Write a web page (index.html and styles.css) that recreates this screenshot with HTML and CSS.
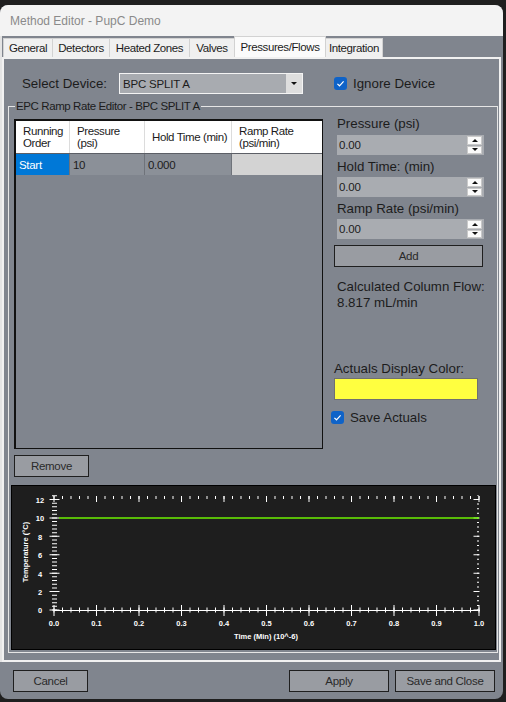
FILE: index.html
```html
<!DOCTYPE html>
<html lang="en">
<head>
  <meta charset="UTF-8" />
  <title>Method Editor - PupC Demo</title>
  <link rel="stylesheet" href="styles.css">
</head>
<body>

  <div class="window">
    <div class="titlebar">Method Editor - PupC Demo</div>

    <div class="tabctl">
      <div class="tabstrip">
        <div class="tab t-general">General</div>
        <div class="tab t-detectors">Detectors</div>
        <div class="tab t-zones">Heated Zones</div>
        <div class="tab t-valves">Valves</div>
        <div class="tab t-flows active">Pressures/Flows</div>
        <div class="tab t-integration">Integration</div>
      </div>

      <div class="tabpage">
        <div class="device-row">
          <label class="device-label">Select Device:</label>
          <div class="combo">
            <span class="combo-text">BPC SPLIT A</span>
            <span class="combo-btn"></span>
          </div>
          <div class="checkrow ignore">
            <svg class="check" width="13" height="13" viewBox="0 0 13 13">
              <rect width="13" height="13" rx="3" fill="#0f63c8"/>
              <path d="M3.4 6.9 L5.5 8.8 L9.6 4.4" fill="none" stroke="#fff" stroke-width="1.2"/>
            </svg>
            <span>Ignore Device</span>
          </div>
        </div>

        <fieldset class="group">
          <legend>EPC Ramp Rate Editor - BPC SPLIT A</legend>

          <div class="editor">
            <div class="grid">
              <div class="grid-head">
                <div class="hcell">Running<br>Order</div>
                <div class="hcell">Pressure<br>(psi)</div>
                <div class="hcell">Hold Time (min)</div>
                <div class="hcell">Ramp Rate<br>(psi/min)</div>
              </div>
              <div class="grid-row">
                <div class="cell selected">Start</div>
                <div class="cell">10</div>
                <div class="cell">0.000</div>
                <div class="cell blank"></div>
              </div>
            </div>

            <div class="side">
              <div class="side-label">Pressure (psi)</div>
              <div class="spin">
                <span class="spin-value">0.00</span>
                <span class="spin-btns"><span class="up"></span><span class="down"></span></span>
              </div>

              <div class="side-label">Hold Time: (min)</div>
              <div class="spin">
                <span class="spin-value">0.00</span>
                <span class="spin-btns"><span class="up"></span><span class="down"></span></span>
              </div>

              <div class="side-label">Ramp Rate (psi/min)</div>
              <div class="spin">
                <span class="spin-value">0.00</span>
                <span class="spin-btns"><span class="up"></span><span class="down"></span></span>
              </div>

              <button class="btn add">Add</button>

              <div class="flow">Calculated Column Flow:<br>8.817 mL/min</div>

              <div class="color-label">Actuals Display Color:</div>
              <div class="color-swatch"></div>

              <div class="checkrow save">
                <svg class="check" width="13" height="13" viewBox="0 0 13 13">
                  <rect width="13" height="13" rx="3" fill="#0f63c8"/>
                  <path d="M3.4 6.9 L5.5 8.8 L9.6 4.4" fill="none" stroke="#fff" stroke-width="1.2"/>
                </svg>
                <span>Save Actuals</span>
              </div>
            </div>
          </div>

          <button class="btn remove">Remove</button>

          <!-- ramp chart: plot box runs x 43..468, y 11..125 (0..12 on the y axis) -->
          <svg class="chart" width="485" height="165" viewBox="0 0 485 165">
            <rect x="0.5" y="0.5" width="484" height="164" fill="#1e1e1e" stroke="#000"/>

            <g stroke="#fff">
              <!-- bottom axis -->
              <line x1="43" y1="125.5" x2="469" y2="125.5" stroke-width="1"/>
              <line x1="42.5" y1="125" x2="469" y2="125" stroke-width="5" stroke-dasharray="1 7.5"/>
              <line x1="42.5" y1="125.5" x2="469" y2="125.5" stroke-width="11" stroke-dasharray="1 41.5"/>
              <!-- top axis -->
              <line x1="42.5" y1="12.5" x2="469" y2="12.5" stroke-width="3" stroke-dasharray="1 7.5"/>
              <line x1="42.5" y1="14" x2="469" y2="14" stroke-width="6" stroke-dasharray="1 41.5"/>
              <!-- left axis -->
              <line x1="43.5" y1="125.5" x2="43.5" y2="10" stroke-width="5" stroke-dasharray="1 2.684"/>
              <line x1="43.5" y1="125.5" x2="43.5" y2="10" stroke-width="10" stroke-dasharray="1 17.42"/>
              <!-- right axis -->
              <line x1="467" y1="125.5" x2="467" y2="10" stroke-width="2" stroke-dasharray="1 3.605"/>
              <line x1="465.5" y1="125.5" x2="465.5" y2="10" stroke-width="6" stroke-dasharray="1 17.42"/>
            </g>

            <line x1="48" y1="33" x2="468" y2="33" stroke="#6cf000" stroke-width="1.6"/>

            <g class="tick-labels" text-anchor="middle">
              <text x="29" y="17.5">12</text>
              <text x="29" y="36">10</text>
              <text x="29" y="54.5">8</text>
              <text x="29" y="73">6</text>
              <text x="29" y="91.5">4</text>
              <text x="29" y="110">2</text>
              <text x="29" y="128">0</text>

              <text x="43" y="141">0.0</text>
              <text x="85.5" y="141">0.1</text>
              <text x="128" y="141">0.2</text>
              <text x="170.5" y="141">0.3</text>
              <text x="213" y="141">0.4</text>
              <text x="255.5" y="141">0.5</text>
              <text x="298" y="141">0.6</text>
              <text x="340.5" y="141">0.7</text>
              <text x="383" y="141">0.8</text>
              <text x="425.5" y="141">0.9</text>
              <text x="468" y="141">1.0</text>

              <text x="255" y="154">Time (Min) (10^-6)</text>
              <text x="17" y="67" transform="rotate(-90 17 67)">Temperature (°C)</text>
            </g>
          </svg>
        </fieldset>
      </div>
    </div>

    <div class="footer">
      <button class="btn cancel">Cancel</button>
      <button class="btn apply">Apply</button>
      <button class="btn save-close">Save and Close</button>
    </div>
  </div>

</body>
</html>
```

FILE: styles.css
```css
body {
  margin: 0;
  background: #1f1f1f;
  font-family: "Liberation Sans", Arial, sans-serif;
  color: #1c1c1c;
}

.window {
  width: 503px;
  height: 694px;
  margin-top: 5px;
  background: #80858e;
  border-radius: 8px;
  overflow: hidden;
  display: flex;
  flex-direction: column;
}

.titlebar {
  height: 31px;
  flex-shrink: 0;
  background: #f3f3f3;
  display: flex;
  align-items: center;
  padding-left: 10px;
  font-size: 12px;
  color: #8a8a8a;
}

/* tab control */

.tabctl {
  height: 626px;
  flex-shrink: 0;
  display: flex;
  flex-direction: column;
  border-left: 2px solid #e4e4e4;
  padding-right: 2px;
}

.tabstrip {
  height: 21px;
  display: flex;
  align-items: flex-end;
  padding-left: 1px;
}

.tab {
  height: 19px;
  box-sizing: border-box;
  background: #f0f0f0;
  border: 1px solid #d2d2d2;
  border-bottom: none;
  margin-right: -1px;
  font-size: 11.5px;
  letter-spacing: -0.4px;
  display: flex;
  align-items: center;
  justify-content: center;
}

.tab.active {
  height: 21px;
  background: #fbfbfb;
}

.t-general { width: 50px; }
.t-detectors { width: 58px; }
.t-zones { width: 81px; }
.t-valves { width: 46px; }
.t-flows { width: 92px; }
.t-integration { width: 58px; }

.tabpage {
  flex: 1;
  border: 2px solid #f1f1f1;
  background: #80858e;
}

/* device selector */

.device-row {
  display: flex;
  align-items: center;
  height: 21px;
  margin-top: 14px;
  padding-left: 18px;
  font-size: 13.3px;
}

.device-label {
  width: 97px;
}

.combo {
  width: 184px;
  height: 21px;
  box-sizing: border-box;
  border: 1px solid #f4f4f4;
  background: #a8abb0;
  display: flex;
  align-items: center;
}

.combo-text {
  flex: 1;
  padding-left: 3px;
  font-size: 11.5px;
  letter-spacing: -0.2px;
}

.combo-btn {
  width: 16px;
  height: 100%;
  background: #dedede;
  display: flex;
  align-items: center;
  justify-content: center;
}

.combo-btn::after {
  content: "";
  border-left: 3px solid transparent;
  border-right: 3px solid transparent;
  border-top: 3px solid #111;
}

.checkrow {
  display: flex;
  align-items: center;
  gap: 6px;
  font-size: 13.3px;
}

.checkrow.ignore {
  margin-left: 31px;
}

.check {
  display: block;
  flex-shrink: 0;
}

/* ramp editor group */

.group {
  margin: 5px 1px 0 4px;
  padding: 6px 1px 2px 5px;
  border: 1px solid #e6e6e6;
  min-width: 0;
}

.group legend {
  margin-left: 1px;
  padding: 0 1px;
  font-size: 11.5px;
  letter-spacing: -0.4px;
  line-height: 14px;
}

.editor {
  display: flex;
  gap: 11px;
}

.grid {
  width: 309px;
  height: 330px;
  box-sizing: border-box;
  border: solid #111;
  border-width: 2px 1px 1px 2px;
}

.grid-head,
.grid-row {
  display: grid;
  grid-template-columns: 54px 75px 87px 1fr;
}

.grid-head {
  height: 33px;
  box-sizing: border-box;
  background: #fff;
  border-bottom: 1px solid #5c5f66;
}

.hcell {
  display: flex;
  align-items: center;
  padding-left: 7px;
  border-right: 1px solid #dcdcdc;
  font-size: 11.5px;
  letter-spacing: -0.4px;
  line-height: 12px;
  white-space: nowrap;
}

.hcell:last-child {
  border-right: none;
}

.grid-row {
  height: 21px;
}

.cell {
  display: flex;
  align-items: center;
  padding-left: 3px;
  background: #8b9098;
  border-right: 1px solid #6f737a;
  font-size: 11.5px;
  letter-spacing: -0.3px;
}

.cell.selected {
  background: #0078d7;
  color: #fff;
}

.cell.blank {
  background: #d3d3d3;
  border-right: none;
}

/* side panel */

.side {
  width: 149px;
  margin-top: -2px;
  display: flex;
  flex-direction: column;
  font-size: 13.3px;
}

.side-label {
  line-height: 14px;
  margin: 5px 0 3px 3px;
  white-space: nowrap;
}

.side-label:first-child {
  margin-top: 0;
  margin-bottom: 4px;
}

.spin {
  width: 147px;
  height: 20px;
  margin-left: 3px;
  background: #a9acb1;
  display: flex;
  align-items: center;
}

.spin-value {
  flex: 1;
  padding-left: 2px;
  font-size: 11.5px;
  letter-spacing: -0.2px;
}

.spin-btns {
  width: 15px;
  height: 18px;
  margin-right: 2px;
  display: flex;
  flex-direction: column;
  gap: 1px;
}

.spin-btns span {
  flex: 1;
  background: #fafafa;
  border: 1px solid #c9c9c9;
  display: flex;
  align-items: center;
  justify-content: center;
}

.spin-btns .up::after {
  content: "";
  border-left: 3px solid transparent;
  border-right: 3px solid transparent;
  border-bottom: 3px solid #111;
}

.spin-btns .down::after {
  content: "";
  border-left: 3px solid transparent;
  border-right: 3px solid transparent;
  border-top: 3px solid #111;
}

.btn {
  height: 22px;
  padding: 0;
  background: #999ca2;
  border: 1px solid #1f1f1f;
  font-family: "Liberation Sans", Arial, sans-serif;
  font-size: 11.5px;
  letter-spacing: -0.3px;
  color: #2a2a2a;
}

.btn.add {
  width: 149px;
  margin-top: 6px;
}

.flow {
  margin: 12px 0 0 3px;
  line-height: 16px;
  white-space: nowrap;
}

.color-label {
  margin-top: 51px;
  line-height: 14px;
  white-space: nowrap;
}

.color-swatch {
  width: 144px;
  height: 22px;
  box-sizing: border-box;
  margin-top: 2px;
  background: #ffff40;
  border: 1px solid #707070;
}

.checkrow.save {
  margin: 9px 0 0 -3px;
  height: 16px;
}

.btn.remove {
  display: block;
  width: 75px;
  margin-top: 6px;
}

.chart {
  display: block;
  margin: 8px 0 0 -3px;
}

.tick-labels {
  fill: #fff;
  font-family: "Liberation Sans", sans-serif;
  font-weight: bold;
  font-size: 7.5px;
}

/* dialog buttons */

.footer {
  flex: 1;
  display: flex;
  align-items: flex-start;
  padding: 8px 8px 0 13px;
  gap: 6px;
}

.btn.cancel {
  width: 75px;
  margin-right: auto;
}

.btn.apply,
.btn.save-close {
  width: 100px;
}
```
